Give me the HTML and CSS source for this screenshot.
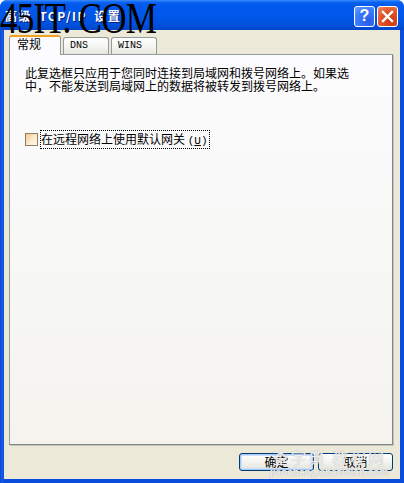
FILE: index.html
```html
<!DOCTYPE html>
<html lang="zh-CN">
<head>
    <meta charset="UTF-8">
    <title>高级 TCP/IP 设置</title>
    <link rel="stylesheet" href="styles.css">
</head>
<body>

<div class="window">
    <!-- Title bar -->
    <div class="titlebar">
        <span class="title">高级 TCP/IP 设置</span>
        <div class="caption-btns">
            <div class="cap-btn help">?</div>
            <div class="cap-btn close">
                <svg width="13" height="13" viewBox="0 0 13 13">
                    <path d="M2 2 L11 11 M11 2 L2 11" stroke="#fff" stroke-width="2.4" stroke-linecap="square"/>
                </svg>
            </div>
        </div>
        <div class="wm-logo">45IT. COM</div>
    </div>

    <!-- Client area -->
    <div class="client">
        <div class="tabs">
            <div class="tab active">常规</div>
            <div class="tab latin">DNS</div>
            <div class="tab latin">WINS</div>
        </div>

        <div class="panel">
            <p class="desc">此复选框只应用于您同时连接到局域网和拨号网络上。如果选<br>中，不能发送到局域网上的数据将被转发到拨号网络上。</p>
            <label class="check-row">
                <span class="checkbox"></span>
                <span class="check-label">在远程网络上使用默认网关 <span class="latin">(<u>U</u>)</span></span>
            </label>
        </div>

        <div class="buttons">
            <div class="btn default">确定</div>
            <div class="btn">取消</div>
        </div>

        <div class="wm-bottom">
            <div class="wm-cn">查字典 教程网</div>
            <div class="wm-en">jiaocheng.chazidian.com</div>
        </div>
    </div>
</div>

</body>
</html>
```

FILE: styles.css
```css
/* General */
body {
    margin: 0;
    padding: 0;
    font-family: "Noto Sans CJK SC", sans-serif;
    font-size: 12px;
    color: #000;
}

/* Window frame */
.window {
    width: 404px;
    height: 483px;
    background: linear-gradient(to right, #0842D0, #1A5FEA 2px, #0A4CDC 4px);
    display: flex;
    flex-direction: column;
    border-radius: 7px 7px 0 0;
    overflow: hidden;
}

/* Title bar */
.titlebar {
    position: relative;
    z-index: 2;
    height: 30px;
    flex-shrink: 0;
    background: linear-gradient(to bottom, #3A8CFF 0%, #0A62F0 8%, #0058EE 20%, #0056E6 55%, #0052DE 80%, #0046C8 100%);
    display: flex;
    align-items: center;
    padding: 0 6px 0 5px;
}

.title {
    color: #fff;
    font-weight: bold;
    font-size: 12px;
    text-shadow: 1px 1px 0 #0A1E80;
    letter-spacing: 1.5px;
    word-spacing: 3px;
}

.caption-btns {
    margin-left: auto;
    display: flex;
    gap: 2px;
    margin-top: 2px;
}

.cap-btn {
    width: 19px;
    height: 19px;
    border: 1px solid #fff;
    border-radius: 3px;
    display: flex;
    align-items: center;
    justify-content: center;
    color: #fff;
}

.cap-btn.help {
    background: radial-gradient(circle at 70% 75%, #2A5CE6, #3C7BFF 60%, #6A9EFF);
    font-family: "Liberation Sans", sans-serif;
    font-weight: bold;
    font-size: 16px;
}

.cap-btn.close {
    background: radial-gradient(circle at 70% 75%, #C93A14, #E2552A 55%, #F08A6A);
}

/* Watermark over the title */
.wm-logo {
    position: absolute;
    left: 0;
    top: -8px;
    font-family: "Liberation Serif", serif;
    font-size: 45px;
    line-height: 52px;
    color: #000;
    white-space: nowrap;
    transform: scaleX(0.78);
    transform-origin: left top;
    letter-spacing: -1px;
}

/* Client area */
.client {
    position: relative;
    flex: 1;
    margin: 0 4px 4px 4px;
    background: #ECE9D8;
    padding: 5px 7px 0 5px;
    display: flex;
    flex-direction: column;
}

/* Tabs */
.tabs {
    display: flex;
    align-items: flex-end;
    height: 19px;
    padding-left: 2px;
    position: relative;
    z-index: 1;
}

.tab {
    height: 16px;
    border: 1px solid #919B9C;
    border-bottom: none;
    border-radius: 3px 3px 0 0;
    background: linear-gradient(to bottom, #FFFFFF, #F3F3EF 60%, #E6E5DE);
    margin-right: 2px;
    line-height: 16px;
}

.tab.latin {
    font-family: "Liberation Mono", monospace;
    font-size: 10px;
    width: 30px;
    padding: 0 8px 0 6px;
}

.tab.active {
    box-sizing: border-box;
    width: 52px;
    height: 20px;
    margin-left: -2px;
    margin-bottom: -1px;
    padding: 0 7px;
    background: #FCFCFE;
    border-top: 2px solid #F0A020;
    line-height: 14px;
}

/* Tab panel */
.panel {
    height: 391px;
    border: 1px solid #919B9C;
    border-right-color: #7F8888;
    border-bottom-color: #7F8888;
    box-shadow: 1px 1px 0 #C6C4B8;
    background: linear-gradient(to bottom, #FCFCFE, #F4F3EE);
    padding: 11px 15px 0 15px;
    box-sizing: border-box;
}

.desc {
    margin: 0;
    line-height: 13px;
}

.check-row {
    display: flex;
    align-items: center;
    margin-top: 38px;
}

.checkbox {
    width: 11px;
    height: 11px;
    border: 1px solid #8C7E5E;
    background: linear-gradient(135deg, #F2C98E, #FCEBD0 55%, #FFF8EC);
    margin-right: 2px;
}

.check-label {
    border: 1px dotted #000;
    padding: 1px 1px 0 0;
    line-height: 13px;
}

.latin {
    font-family: "Liberation Mono", monospace;
    font-size: 11px;
}

/* Dialog buttons */
.buttons {
    display: flex;
    justify-content: flex-end;
    gap: 4px;
    margin-top: 8px;
}

.btn {
    width: 73px;
    height: 16px;
    border: 1px solid #003C74;
    border-radius: 3px;
    background: linear-gradient(to bottom, #FFFFFF, #F4F4F0 50%, #E3E2DA);
    text-align: center;
    line-height: 16px;
}

.btn.default {
    box-shadow: inset 0 0 0 1px #A7C7F4, inset 0 0 0 2px #CDE0FA;
}

/* Bottom watermark */
.wm-bottom {
    position: absolute;
    left: 266px;
    top: 417px;
    text-align: center;
    color: rgba(255, 255, 255, 0.8);
    text-shadow: 0 0 1px #A0A0A0;
}

.wm-cn {
    font-size: 16px;
    line-height: 20px;
    letter-spacing: 2px;
}

.wm-en {
    font-family: "Liberation Sans", sans-serif;
    font-size: 10px;
    line-height: 11px;
    font-weight: bold;
}
```
